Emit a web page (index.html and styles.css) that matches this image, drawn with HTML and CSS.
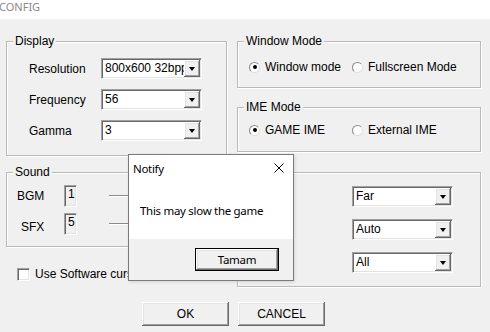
FILE: index.html
```html
<!DOCTYPE html>
<html>
<head>
<meta charset="utf-8">
<title>CONFIG</title>
<link rel="stylesheet" href="styles.css">
</head>
<body>
<div class="titlebar"><span class="title">CONFIG</span></div>
<div class="main">
  <div class="grid">
    <div class="group g-display">
      <span class="legend">Display</span>
      <div class="form">
        <span class="lbl">Resolution</span>
        <div class="combo"><span class="val">800x600 32bpp</span><span class="arrow"></span></div>
        <span class="lbl">Frequency</span>
        <div class="combo"><span class="val">56</span><span class="arrow"></span></div>
        <span class="lbl">Gamma</span>
        <div class="combo"><span class="val">3</span><span class="arrow"></span></div>
      </div>
    </div>
    <div class="col-right">
      <div class="group g-window">
        <span class="legend">Window Mode</span>
        <div class="radios">
          <span class="radio on"><span class="dot"></span>Window mode</span>
          <span class="radio"><span class="dot"></span>Fullscreen Mode</span>
        </div>
      </div>
      <div class="group g-ime">
        <span class="legend">IME Mode</span>
        <div class="radios">
          <span class="radio on"><span class="dot"></span>GAME IME</span>
          <span class="radio"><span class="dot"></span>External IME</span>
        </div>
      </div>
    </div>
    <div class="col-left2">
      <div class="group g-sound">
        <span class="legend">Sound</span>
        <div class="sound-row"><span class="slbl">BGM</span><span class="edit">1</span><span class="track"></span></div>
        <div class="sound-row"><span class="slbl sfx">SFX</span><span class="edit">5</span><span class="track"></span></div>
      </div>
      <div class="check"><span class="box"></span>Use Software cursor</div>
    </div>
    <div class="group g-other">
      <div class="combo"><span class="val">Far</span><span class="arrow"></span></div>
      <div class="combo"><span class="val">Auto</span><span class="arrow"></span></div>
      <div class="combo"><span class="val">All</span><span class="arrow"></span></div>
    </div>
  </div>
  <div class="buttons">
    <div class="btn">OK</div>
    <div class="btn">CANCEL</div>
  </div>
</div>

<div class="dialog">
  <div class="dlg-title">
    <span>Notify</span>
    <svg class="close" width="10" height="10" viewBox="0 0 10 10"><path d="M0.5 0.5 L9.5 9.5 M9.5 0.5 L0.5 9.5" stroke="#000" stroke-width="1" fill="none"/></svg>
  </div>
  <div class="dlg-body">This may slow the game</div>
  <div class="dlg-foot"><div class="btn btn-default">Tamam</div></div>
</div>
</body>
</html>
```

FILE: styles.css
```css
* { box-sizing: border-box; }
html, body { margin: 0; padding: 0; }
body {
  width: 490px;
  height: 332px;
  overflow: hidden;
  background: #f0f0f0;
  font-family: "Liberation Sans", Arial, sans-serif;
  font-size: 12px;
  color: #000;
  position: relative;
}
.titlebar {
  height: 19px;
  background: #fff;
  overflow: hidden;
}
.title {
  display: block;
  margin-left: -1px;
  font-family: "Noto Sans", sans-serif;
  font-size: 11px;
  line-height: 13px;
  color: #8a8a8a;
}
.main { padding: 22px 0 0 6px; }
.grid {
  display: grid;
  grid-template-columns: 221px 244px;
  column-gap: 10px;
  row-gap: 16px;
  align-items: start;
}
.group {
  border: 1px solid #b9b9b9;
  box-shadow: 1px 1px 0 #fff, inset 1px 1px 0 #fff;
}
.legend {
  display: block;
  width: max-content;
  margin: -8px 0 0 6px;
  padding: 0 2px;
  line-height: 14px;
  height: 14px;
  background: #f0f0f0;
}
.g-display { height: 115px; }
.form {
  margin-top: 10px;
  padding-left: 22px;
  display: grid;
  grid-template-columns: 72px 101px;
  row-gap: 10px;
  align-items: center;
}
.lbl { line-height: 14px; }
.combo {
  width: 101px;
  height: 21px;
  background: #fff;
  border: 1px solid;
  border-color: #a0a0a0 #fff #fff #a0a0a0;
  box-shadow: inset 1px 1px 0 #696969, inset -1px -1px 0 #e3e3e3;
  display: flex;
  align-items: stretch;
  padding: 1px;
}
.val {
  flex: 1;
  min-width: 0;
  overflow: hidden;
  white-space: nowrap;
  padding-left: 2px;
  line-height: 17px;
}
.arrow {
  width: 16px;
  background: #f0f0f0;
  box-shadow: inset -1px -1px 0 #696969, inset 1px 1px 0 #fff, inset -2px -2px 0 #a0a0a0, inset 2px 2px 0 #e3e3e3;
  display: flex;
  align-items: center;
  justify-content: center;
}
.arrow::before {
  content: "";
  border-left: 3.5px solid transparent;
  border-right: 3.5px solid transparent;
  border-top: 4px solid #000;
  margin-top: 1px;
}
.col-right { display: flex; flex-direction: column; gap: 19px; }
.g-window { height: 47px; }
.g-ime { height: 45px; }
.radios { display: flex; padding-left: 11px; }
.g-window .radios { margin-top: 12px; }
.g-ime .radios { margin-top: 9px; }
.radio { display: flex; align-items: center; line-height: 14px; gap: 5px; }
.radio:first-child { width: 103px; }
.dot {
  width: 11px;
  height: 11px;
  border-radius: 50%;
  background: #fff;
  border: 1px solid;
  border-color: #8a8a8a #e0e0e0 #e0e0e0 #8a8a8a;
  display: flex;
  align-items: center;
  justify-content: center;
}
.radio.on .dot::before {
  content: "";
  width: 4px;
  height: 4px;
  border-radius: 50%;
  background: #000;
}
.g-sound { height: 75px; }
.sound-row {
  display: flex;
  align-items: center;
  height: 22px;
  padding-left: 10px;
  margin-top: 6px;
}
.slbl { width: 47px; line-height: 14px; }
.slbl.sfx { padding-left: 4px; margin-top: 6px; }
.edit {
  width: 13px;
  height: 22px;
  border: 1px solid;
  border-color: #a0a0a0 #fff #fff #a0a0a0;
  box-shadow: inset 1px 1px 0 #696969, inset -1px -1px 0 #e3e3e3;
  padding: 1px 0 0 3px;
  line-height: 14px;
  align-self: flex-start;
}
.track {
  width: 106px;
  margin-left: 32px;
  border-top: 1px solid #8a8a8a;
  border-bottom: 1px solid #fff;
}
.check {
  display: flex;
  align-items: center;
  gap: 5px;
  margin: 20px 0 0 11px;
  line-height: 14px;
  white-space: nowrap;
}
.box {
  width: 13px;
  height: 13px;
  background: #fff;
  border: 1px solid;
  border-color: #a0a0a0 #fff #fff #a0a0a0;
  box-shadow: inset 1px 1px 0 #696969, inset -1px -1px 0 #e3e3e3;
}
.g-other {
  height: 115px;
  padding: 13px 0 0 114px;
  display: flex;
  flex-direction: column;
  gap: 12px;
}
.buttons {
  display: flex;
  gap: 9px;
  margin-top: 15px;
  padding-left: 136px;
}
.btn {
  width: 87px;
  height: 24px;
  background: #f0f0f0;
  box-shadow: inset -1px -1px 0 #696969, inset 1px 1px 0 #fff, inset -2px -2px 0 #a0a0a0, inset 2px 2px 0 #e3e3e3;
  display: flex;
  align-items: center;
  justify-content: center;
  line-height: 14px;
}
.dialog {
  position: absolute;
  left: 128px;
  top: 154px;
  width: 166px;
  height: 127px;
  border: 1px solid #7a7a7a;
  background: #fff;
  box-shadow: 1px 1px 3px rgba(0,0,0,0.12);
  display: flex;
  flex-direction: column;
  font-family: "Noto Sans", sans-serif;
  font-size: 11.5px;
  letter-spacing: -0.3px;
}
.dlg-title {
  height: 26px;
  display: flex;
  align-items: center;
  justify-content: space-between;
  padding: 0 9px 0 4px;
}
.dlg-body {
  height: 58px;
  display: flex;
  align-items: center;
  padding-left: 11px;
}
.dlg-foot {
  flex: 1;
  background: #f0f0f0;
  display: flex;
  justify-content: flex-end;
  padding: 9px 14px 0 0;
}
.btn-default {
  width: 84px;
  height: 23px;
  font-family: "Noto Sans", sans-serif;
  border: 1px solid #000;
  box-shadow: inset -1px -1px 0 #696969, inset 1px 1px 0 #fff, inset -2px -2px 0 #a0a0a0, inset 2px 2px 0 #e3e3e3;
}
```
